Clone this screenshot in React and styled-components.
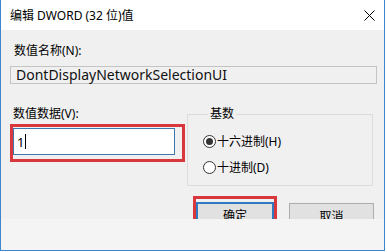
import React from "react";
import styled, { createGlobalStyle } from "styled-components";

const GlobalStyle = createGlobalStyle`
  html, body {
    margin: 0;
    padding: 0;
    background: #fff;
  }
  body {
    font-family: "Noto Sans", "Noto Sans CJK SC", sans-serif;
    font-size: 12px;
    color: #000;
  }
`;

const Window = styled.div`
  width: 383px;
  height: 250px;
  border: 1px solid #3b86cc;
  border-top: none;
  display: flex;
  flex-direction: column;
  background: #f0f0f0;
  overflow: hidden;
`;

const TitleBar = styled.div`
  height: 30px;
  flex: none;
  background: #fff;
  display: flex;
  align-items: center;
  justify-content: space-between;
  padding: 0 8px 0 9px;
  font-size: 12px;
`;

const CloseIcon = styled.svg`
  width: 11px;
  height: 11px;
  margin-right: 1px;
`;

const Body = styled.div`
  height: 189px;
  box-sizing: border-box;
  flex: none;
  overflow: hidden;
  padding: 13px 7px 0 9px;
  display: flex;
  flex-direction: column;
`;

const Label = styled.div`
  line-height: 16px;
  padding-left: ${(p) => p.$indent || 3}px;
`;

const NameBox = styled.div`
  margin-top: 7px;
  height: 16px;
  flex: none;
  border: 1px solid #c4c4c4;
  padding-left: 5px;
  display: flex;
  align-items: center;
  font-size: 14px;
  line-height: 16px;
  color: #111;
`;

const ValueRow = styled.div`
  margin-top: 22px;
  flex: none;
  display: flex;
  align-items: flex-start;
`;

const ValueCol = styled.div`
  width: 175px;
  display: flex;
  flex-direction: column;
`;

const Highlight = styled.div`
  margin-top: 2px;
  border: 3px solid #d8383d;
  padding: 1px 7px 4px 0;
`;

const ValueInput = styled.div`
  height: 25px;
  background: #fff;
  border: 1px solid #3f78ad;
  display: flex;
  align-items: center;
  padding-left: 3px;
  font-size: 13px;
`;

const Caret = styled.span`
  display: inline-block;
  width: 1px;
  height: 15px;
  background: #000;
  margin-left: 1px;
`;

const Group = styled.fieldset`
  margin: 0 0 0 2px;
  width: 186px;
  height: 80px;
  box-sizing: border-box;
  border: 1px solid #dcdcdc;
  padding: 12px 0 0 15px;
  display: flex;
  flex-direction: column;
  gap: 12px;
`;

const Legend = styled.legend`
  padding: 0 2px;
  margin-left: 5px;
  line-height: 16px;
`;

const RadioRow = styled.div`
  display: flex;
  align-items: center;
  gap: 1px;
  height: 14px;
`;

const RadioDot = styled.span`
  width: 13px;
  height: 13px;
  box-sizing: border-box;
  border-radius: 50%;
  border: 1px solid #333;
  background: #fff;
  display: flex;
  align-items: center;
  justify-content: center;
  &::after {
    content: "";
    width: 7px;
    height: 7px;
    border-radius: 50%;
    background: ${(p) => (p.$checked ? "#333" : "transparent")};
  }
`;

const ButtonRow = styled.div`
  margin-top: 10px;
  flex: none;
  display: flex;
  align-items: flex-start;
  padding-left: 183px;
  gap: 12px;
`;

const ButtonHighlight = styled.div`
  border: 3px solid #d8383d;
  padding: 3px 0 0;
`;

const Button = styled.div`
  width: ${(p) => p.$w}px;
  height: 26px;
  box-sizing: border-box;
  border: ${(p) => (p.$default ? "2px solid #2f78c2" : "1px solid #adadad")};
  background: #e1e1e1;
  display: flex;
  align-items: center;
  justify-content: center;
  margin-top: ${(p) => p.$top || 0}px;
`;

const Footer = styled.div`
  flex: 1;
  background: #f4f4f4;
`;

export default function App() {
  return (
    <>
      <GlobalStyle />
      <Window>
        <TitleBar>
          <span>编辑 DWORD (32 位)值</span>
          <CloseIcon viewBox="0 0 11 11">
            <path d="M0.5 0.5 L10.5 10.5 M10.5 0.5 L0.5 10.5" stroke="#000" strokeWidth="1" fill="none" />
          </CloseIcon>
        </TitleBar>
        <Body>
          <Label $indent={4}>数值名称(N):</Label>
          <NameBox>DontDisplayNetworkSelectionUI</NameBox>
          <ValueRow>
            <ValueCol>
              <Label>数值数据(V):</Label>
              <Highlight>
                <ValueInput>
                  1<Caret />
                </ValueInput>
              </Highlight>
            </ValueCol>
            <Group>
              <Legend>基数</Legend>
              <RadioRow>
                <RadioDot $checked />
                <span>十六进制(H)</span>
              </RadioRow>
              <RadioRow>
                <RadioDot />
                <span>十进制(D)</span>
              </RadioRow>
            </Group>
          </ValueRow>
          <ButtonRow>
            <ButtonHighlight>
              <Button $w={78} $default>确定</Button>
            </ButtonHighlight>
            <Button $w={85} $top={7}>取消</Button>
          </ButtonRow>
        </Body>
        <Footer />
      </Window>
    </>
  );
}
